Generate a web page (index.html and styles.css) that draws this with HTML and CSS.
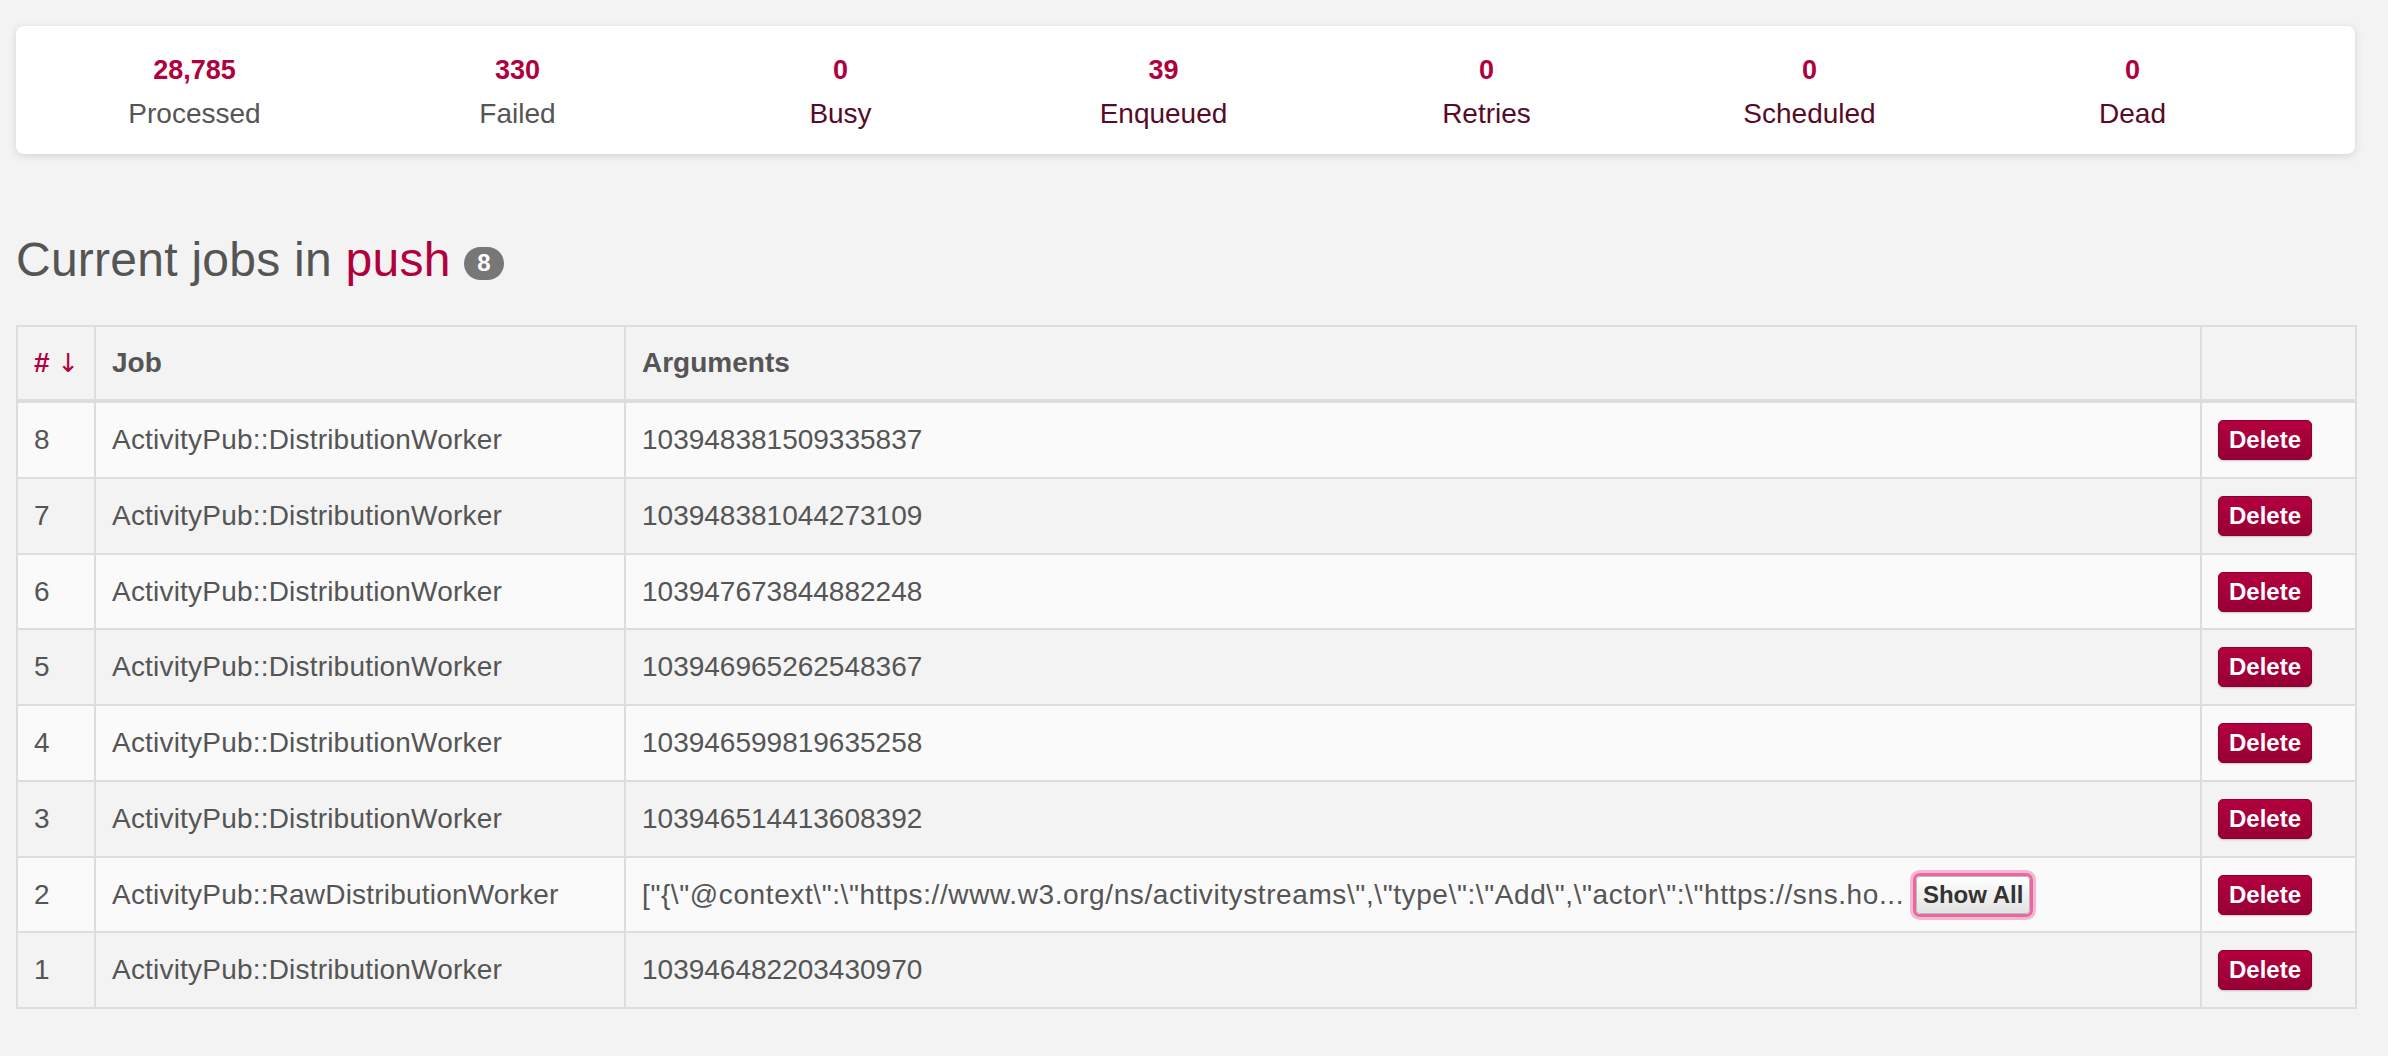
FILE: index.html
```html
<!DOCTYPE html>
<html lang="en">
<head>
<meta charset="utf-8">
<title>Sidekiq - Queue push</title>
<link rel="stylesheet" href="styles.css">
</head>
<body>
<div class="page">
  <section class="summary">
    <div class="stat">
      <div class="count">28,785</div>
      <div class="desc plain">Processed</div>
    </div>
    <div class="stat">
      <div class="count">330</div>
      <div class="desc plain">Failed</div>
    </div>
    <div class="stat">
      <div class="count">0</div>
      <div class="desc link">Busy</div>
    </div>
    <div class="stat">
      <div class="count">39</div>
      <div class="desc link">Enqueued</div>
    </div>
    <div class="stat">
      <div class="count">0</div>
      <div class="desc link">Retries</div>
    </div>
    <div class="stat">
      <div class="count">0</div>
      <div class="desc link">Scheduled</div>
    </div>
    <div class="stat">
      <div class="count">0</div>
      <div class="desc link">Dead</div>
    </div>
  </section>

  <h3 class="title">Current jobs in <span class="queue">push</span> <span class="badge">8</span></h3>

  <table class="jobs">
    <colgroup>
      <col class="c-num">
      <col class="c-job">
      <col class="c-args">
      <col class="c-act">
    </colgroup>
    <thead>
      <tr>
        <th class="sort"><b>#</b> <span class="arrow">↓</span></th>
        <th>Job</th>
        <th>Arguments</th>
        <th></th>
      </tr>
    </thead>
    <tbody>
      <tr>
        <td>8</td>
        <td class="job">ActivityPub::DistributionWorker</td>
        <td>103948381509335837</td>
        <td><button class="btn-delete">Delete</button></td>
      </tr>
      <tr>
        <td>7</td>
        <td class="job">ActivityPub::DistributionWorker</td>
        <td>103948381044273109</td>
        <td><button class="btn-delete">Delete</button></td>
      </tr>
      <tr>
        <td>6</td>
        <td class="job">ActivityPub::DistributionWorker</td>
        <td>103947673844882248</td>
        <td><button class="btn-delete">Delete</button></td>
      </tr>
      <tr>
        <td>5</td>
        <td class="job">ActivityPub::DistributionWorker</td>
        <td>103946965262548367</td>
        <td><button class="btn-delete">Delete</button></td>
      </tr>
      <tr>
        <td>4</td>
        <td class="job">ActivityPub::DistributionWorker</td>
        <td>103946599819635258</td>
        <td><button class="btn-delete">Delete</button></td>
      </tr>
      <tr>
        <td>3</td>
        <td class="job">ActivityPub::DistributionWorker</td>
        <td>103946514413608392</td>
        <td><button class="btn-delete">Delete</button></td>
      </tr>
      <tr>
        <td>2</td>
        <td class="job">ActivityPub::RawDistributionWorker</td>
        <td><span class="args-text">["{\"@context\":\"https://www.w3.org/ns/activitystreams\",\"type\":\"Add\",\"actor\":\"https://sns.ho...</span> <button class="btn-show">Show All</button></td>
        <td><button class="btn-delete">Delete</button></td>
      </tr>
      <tr>
        <td>1</td>
        <td class="job">ActivityPub::DistributionWorker</td>
        <td>103946482203430970</td>
        <td><button class="btn-delete">Delete</button></td>
      </tr>
    </tbody>
  </table>
</div>
</body>
</html>
```
FILE: styles.css
```css
html, body {
  margin: 0;
  padding: 0;
}

body {
  background: #f3f3f3;
  font-family: "Liberation Sans", Arial, sans-serif;
  font-size: 28px;
  color: #555555;
}

.page {
  padding: 26px 33px 0 16px;
}

.summary {
  display: flex;
  background: #ffffff;
  border-radius: 8px;
  box-shadow: 0 2px 8px rgba(0, 0, 0, 0.13);
  padding: 24px 0 20px 17px;
  height: 84px;
}

.stat {
  width: 323px;
  text-align: center;
  display: flex;
  flex-direction: column;
  gap: 4px;
}

.count {
  font-weight: bold;
  color: #b1003e;
  line-height: 40px;
  font-size: 27px;
}

.desc {
  line-height: 40px;
}

.desc.plain {
  color: #555555;
}

.desc.link {
  color: #580b28;
}

.title {
  margin: 79px 0 39px 0;
  font-size: 48px;
  font-weight: normal;
  line-height: 53px;
  color: #555555;
  letter-spacing: 0.25px;
}

.queue {
  color: #b1003e;
}

.badge {
  display: inline-block;
  vertical-align: middle;
  background: #777777;
  color: #ffffff;
  font-size: 24px;
  font-weight: bold;
  line-height: 24px;
  letter-spacing: 0;
  padding: 4.5px 13px;
  border-radius: 17px;
}

.jobs {
  width: 2339px;
  table-layout: fixed;
  border-collapse: collapse;
  border: 2px solid #dddddd;
}

.c-num { width: 78px; }
.c-job { width: 530px; }
.c-args { width: 1576px; }
.c-act { width: 155px; }

.jobs th,
.jobs td {
  border: 2px solid #dddddd;
  padding: 16px 16px;
  text-align: left;
  white-space: nowrap;
  overflow: hidden;
  vertical-align: middle;
}

.jobs th {
  line-height: 40px;
  font-weight: bold;
  color: #555555;
  border-bottom-width: 4px;
}

.jobs td {
  line-height: 41.75px;
  padding-top: 16px;
  padding-bottom: 16px;
}

.jobs td.job {
  letter-spacing: 0.2px;
}

.args-text {
  letter-spacing: 0.6px;
}

.jobs th.sort {
  color: #b1003e;
}

.arrow {
  font-weight: normal;
  font-family: "DejaVu Sans", sans-serif;
  font-size: 26px;
}

.jobs tbody tr:nth-child(odd) {
  background: #fafafa;
}

.btn-delete {
  font-family: "Liberation Sans", Arial, sans-serif;
  font-size: 24px;
  font-weight: bold;
  line-height: 36px;
  padding: 1px 10px 1px 10px;
  color: #ffffff;
  background: linear-gradient(#b3003f, #970034);
  border: 1px solid #8c0031;
  border-radius: 5px;
  box-shadow: 0 1px 2px rgba(0, 0, 0, 0.2);
  vertical-align: top;
  margin: 1px 0 0 0;
}

.btn-show {
  font-family: "Liberation Sans", Arial, sans-serif;
  font-size: 24px;
  font-weight: bold;
  line-height: 36px;
  padding: 0 6px;
  margin: 2px 0 0 4px;
  color: #333333;
  background: linear-gradient(#ffffff, #e2e2e2);
  border: 1px solid #bbbbbb;
  border-radius: 4px;
  box-shadow: 0 0 0 3px #e8689f, 0 0 0 6px #f5b8d2;
  vertical-align: top;
}
```
